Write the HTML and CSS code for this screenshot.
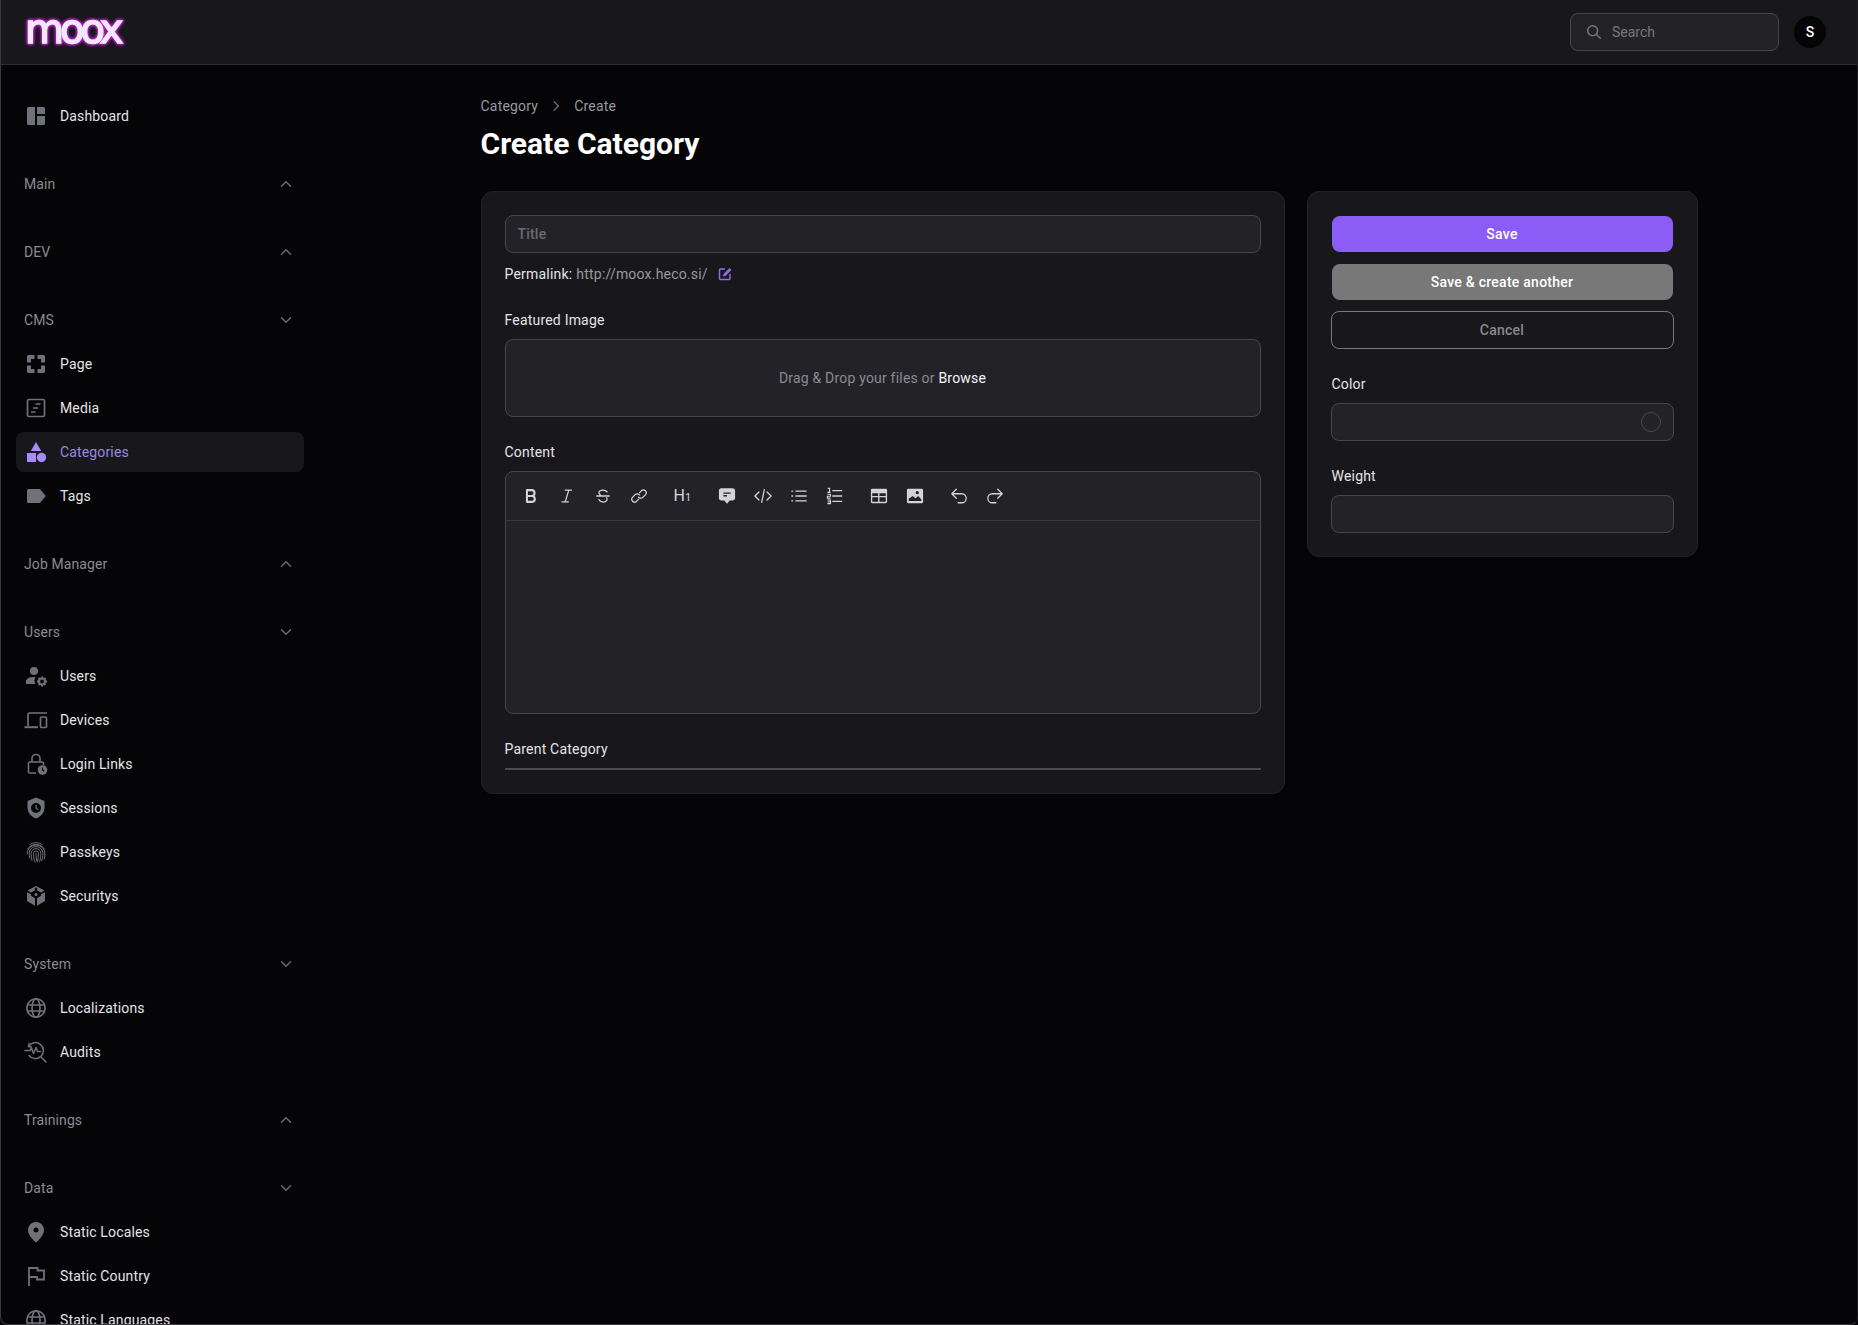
FILE: index.html
```html
<!DOCTYPE html>
<html lang="en">

<head>
  <meta charset="UTF-8">
  <meta name="viewport" content="width=device-width, initial-scale=1.0">
  <title>Create Category</title>
  <link rel="stylesheet" href="styles.css">
</head>

<body>
  <div class="app">
    <header class="topbar">
      <a class="logo">moox</a>
      <div class="topbar-right">
        <div class="search">
          <svg class="search-icon" viewBox="0 0 20 20" fill="none" stroke="currentColor" stroke-width="1.6" stroke-linecap="round"><circle cx="8.5" cy="8.5" r="5.5"/><path d="M12.7 12.7 17 17"/></svg>
          <span>Search</span>
        </div>
        <div class="avatar">S</div>
      </div>
    </header>

    <div class="layout">
      <nav class="sidebar">
        <a class="item">
          <svg class="ico" viewBox="0 0 24 24" fill="currentColor"><path d="M4.500 3H11v18H4.500A1.500 1.500 0 0 1 3 19.500v-15A1.500 1.500 0 0 1 4.500 3ZM13 3h6.500A1.500 1.500 0 0 1 21 4.500V10h-8ZM13 12h8v7.500a1.500 1.500 0 0 1-1.500 1.500H13Z"/></svg>
          <span>Dashboard</span>
        </a>

        <div class="group-head"><span>Main</span><svg class="chev" viewBox="0 0 20 20" fill="none" stroke="currentColor" stroke-width="1.6" stroke-linecap="round" stroke-linejoin="round"><path d="m5 12.500 5-5 5 5"/></svg></div>
        <div class="group-head"><span>DEV</span><svg class="chev" viewBox="0 0 20 20" fill="none" stroke="currentColor" stroke-width="1.6" stroke-linecap="round" stroke-linejoin="round"><path d="m5 12.500 5-5 5 5"/></svg></div>

        <div class="group">
          <div class="group-head"><span>CMS</span><svg class="chev" viewBox="0 0 20 20" fill="none" stroke="currentColor" stroke-width="1.6" stroke-linecap="round" stroke-linejoin="round"><path d="m5 7.500 5 5 5-5"/></svg></div>
          <a class="item">
            <svg class="ico" viewBox="0 0 24 24" fill="currentColor"><path d="M3 4.500A1.500 1.500 0 0 1 4.500 3h6v4H7v3.500H3ZM13.500 3h6A1.500 1.500 0 0 1 21 4.500v6h-4V7h-3.500ZM3 13.500h4V17h3.500v4h-6A1.500 1.500 0 0 1 3 19.500ZM17 13.500h4v6a1.500 1.500 0 0 1-1.500 1.500h-6v-4H17Z"/></svg>
            <span>Page</span>
          </a>
          <a class="item">
            <svg class="ico" viewBox="0 0 24 24" fill="none" stroke="currentColor" stroke-width="1.700"><rect x="3.500" y="3.500" width="17" height="17" rx="1.500"/><path d="M11.500 8h5M9 12h5M7 16h4.500"/></svg>
            <span>Media</span>
          </a>
          <a class="item active">
            <svg class="ico" viewBox="0 0 24 24" fill="currentColor"><path d="M12 2 17.200 11H6.800Z"/><rect x="3" y="13" width="9" height="9"/><circle cx="17.500" cy="17.500" r="4.700"/></svg>
            <span>Categories</span>
          </a>
          <a class="item">
            <svg class="ico" viewBox="0 0 24 24" fill="currentColor"><path d="M4.500 5H16l5.800 7-5.800 7H4.500A1.500 1.500 0 0 1 3 17.500v-11A1.500 1.500 0 0 1 4.500 5Z"/></svg>
            <span>Tags</span>
          </a>
        </div>

        <div class="group-head"><span>Job Manager</span><svg class="chev" viewBox="0 0 20 20" fill="none" stroke="currentColor" stroke-width="1.6" stroke-linecap="round" stroke-linejoin="round"><path d="m5 12.500 5-5 5 5"/></svg></div>

        <div class="group">
          <div class="group-head"><span>Users</span><svg class="chev" viewBox="0 0 20 20" fill="none" stroke="currentColor" stroke-width="1.6" stroke-linecap="round" stroke-linejoin="round"><path d="m5 7.500 5 5 5-5"/></svg></div>
          <a class="item">
            <svg class="ico" viewBox="0 0 24 24" fill="currentColor"><circle cx="10" cy="7" r="4"/><path d="M2 20v-2.500c0-2.500 3-4.500 8-4.500l1.500.1A6.500 6.500 0 0 0 11.500 20Z"/><circle cx="18" cy="17.500" r="3" fill="none" stroke="currentColor" stroke-width="2.200"/><path d="M18 12.500v2M18 20.500v2M13 17.500h2M21 17.500h2M14.500 14l1.400 1.400M20.100 19.600l1.400 1.400M14.500 21l1.400-1.400M20.100 15.400l1.400-1.400" stroke="currentColor" stroke-width="1.800"/></svg>
            <span>Users</span>
          </a>
          <a class="item">
            <svg class="ico" viewBox="0 0 24 24" fill="none" stroke="currentColor" stroke-width="1.700"><path d="M23 5H5.500A1.500 1.500 0 0 0 4 6.500V18"/><path d="M.500 19.200h13.500" stroke-width="2"/><rect x="16.500" y="9" width="6" height="10.500" rx="1"/></svg>
            <span>Devices</span>
          </a>
          <a class="item">
            <svg class="ico" viewBox="0 0 24 24" fill="none" stroke="currentColor" stroke-width="1.600"><path d="M12 21H5.500a1 1 0 0 1-1-1V11a1 1 0 0 1 1-1h13a1 1 0 0 1 1 1v2"/><path d="M8 10V6.500a4 4 0 0 1 8 0V10"/><circle cx="18.500" cy="18" r="4.800" fill="currentColor" stroke="none"/><path d="M18.500 15.500V18l1.800 1.200" stroke="#050507" stroke-width="1.200"/></svg>
            <span>Login Links</span>
          </a>
          <a class="item">
            <svg class="ico" viewBox="0 0 24 24" fill="currentColor"><path fill-rule="evenodd" d="M12 1.500 20.500 5v6.500c0 5-3.500 9.200-8.500 11-5-1.800-8.500-6-8.500-11V5ZM12 7a5 5 0 1 0 0 10 5 5 0 0 0 0-10Z"/><path d="M11.500 9h1.200v3l2 1.200-.6 1-2.600-1.600Z"/></svg>
            <span>Sessions</span>
          </a>
          <a class="item">
            <svg class="ico" viewBox="0 0 24 24" fill="none" stroke="currentColor" stroke-width="1" stroke-linecap="round"><path d="M6 4.500a11 11 0 0 1 12 0"/><path d="M3.500 9a10 10 0 0 1 17 0"/><path d="M3 14a9 9 0 0 1 18 0c0 2-.3 3.500-.8 5"/><path d="M5.700 18c-.4-1.500-.6-3-.6-4.500a6.900 6.900 0 0 1 13.800 0c0 2.500-.3 4.800-1.200 7"/><path d="M8 20.500c-.6-2-.9-4.500-.9-7a4.900 4.900 0 0 1 9.800 0c0 3-.4 5.500-1.200 8"/><path d="M11 22c-.9-2.500-1.500-5.500-1.500-8.500a2.500 2.500 0 0 1 5 0c0 3-.4 5.500-1 8"/><path d="M12 13.500c0 3 .5 6 1 8"/></svg>
            <span>Passkeys</span>
          </a>
          <a class="item">
            <svg class="ico" viewBox="0 0 24 24" fill="currentColor"><path d="M12 2 3.500 6.500 7 8.500l3.800-2V3.700h2.400v2.800L17 8.500l3.500-2ZM3 8.200V17l8 4.700v-7.500l-4-2.400v-1.300ZM21 8.200V17l-8 4.700v-7.500l4-2.400v-1.300Z"/><circle cx="12" cy="10.500" r="1.500"/></svg>
            <span>Securitys</span>
          </a>
        </div>

        <div class="group">
          <div class="group-head"><span>System</span><svg class="chev" viewBox="0 0 20 20" fill="none" stroke="currentColor" stroke-width="1.6" stroke-linecap="round" stroke-linejoin="round"><path d="m5 7.500 5 5 5-5"/></svg></div>
          <a class="item">
            <svg class="ico" viewBox="0 0 24 24" fill="none" stroke="currentColor" stroke-width="1.700"><circle cx="12" cy="12" r="9.200"/><ellipse cx="12" cy="12" rx="4" ry="9.200"/><path d="M3.200 9h17.600M3.200 15h17.600"/></svg>
            <span>Localizations</span>
          </a>
          <a class="item">
            <svg class="ico" viewBox="0 0 24 24" fill="none" stroke="currentColor" stroke-width="1.500" stroke-linecap="round" stroke-linejoin="round"><path d="M4.500 6.500A8 8 0 1 1 5 15.500"/><path d="M1 10.500h5l1.500-2.500 2 5.500 2.500-6 1.500 4h3"/><path d="m4.500 6.500.5-3M4.500 6.500l3 .5M17 17l5 5" /></svg>
            <span>Audits</span>
          </a>
        </div>

        <div class="group-head"><span>Trainings</span><svg class="chev" viewBox="0 0 20 20" fill="none" stroke="currentColor" stroke-width="1.6" stroke-linecap="round" stroke-linejoin="round"><path d="m5 12.500 5-5 5 5"/></svg></div>

        <div class="group">
          <div class="group-head"><span>Data</span><svg class="chev" viewBox="0 0 20 20" fill="none" stroke="currentColor" stroke-width="1.6" stroke-linecap="round" stroke-linejoin="round"><path d="m5 7.500 5 5 5-5"/></svg></div>
          <a class="item">
            <svg class="ico" viewBox="0 0 24 24" fill="currentColor"><path fill-rule="evenodd" d="M12 2a8 8 0 0 1 8 8c0 4.500-4 9-8 12.500C8 19 4 14.500 4 10a8 8 0 0 1 8-8Zm0 5.500a2.500 2.500 0 1 0 0 5 2.500 2.500 0 0 0 0-5Z"/></svg>
            <span>Static Locales</span>
          </a>
          <a class="item">
            <svg class="ico" viewBox="0 0 24 24" fill="none" stroke="currentColor" stroke-width="1.800"><path d="M5 22V4h8.500v2.500H20v9h-7v-2.500H5"/></svg>
            <span>Static Country</span>
          </a>
          <a class="item">
            <svg class="ico" viewBox="0 0 24 24" fill="none" stroke="currentColor" stroke-width="1.700"><circle cx="12" cy="12" r="9.200"/><ellipse cx="12" cy="12" rx="4" ry="9.200"/><path d="M3.200 9h17.600M3.200 15h17.600"/></svg>
            <span>Static Languages</span>
          </a>
        </div>
      </nav>

      <main class="main">
        <div class="container">
          <div class="breadcrumb">
            <span>Category</span>
            <svg class="crumb-sep" viewBox="0 0 20 20" fill="none" stroke="currentColor" stroke-width="1.500" stroke-linecap="round" stroke-linejoin="round"><path d="m7.500 4.500 5.500 5.500-5.500 5.500"/></svg>
            <span>Create</span>
          </div>
          <h1 class="title">Create Category</h1>

          <div class="form-grid">
            <section class="card main-card">
              <div class="input title-input">Title</div>
              <div class="permalink">
                <span class="permalink-label">Permalink:</span>
                <span class="permalink-url">http://moox.heco.si/</span>
                <svg class="edit-icon" viewBox="0 0 16 16" fill="none" stroke="currentColor" stroke-width="1.500"><path d="M8 3H3.500a1 1 0 0 0-1 1v8.500a1 1 0 0 0 1 1H12a1 1 0 0 0 1-1V8"/><path d="M6 10.500 6.500 8l6-6 2 2-6 6Z" fill="currentColor" stroke="none"/></svg>
              </div>

              <label class="label label-image">Featured Image</label>
              <div class="dropzone">Drag &amp; Drop your files or&nbsp;<span class="browse">Browse</span></div>

              <label class="label label-content">Content</label>
              <div class="editor">
                <div class="toolbar">
                  <div class="tool-group">
                    <span class="tool"><svg viewBox="0 0 20 20" fill="none" stroke="currentColor" stroke-width="2.300" stroke-linejoin="round"><path d="M5.500 3.500h5.200a3.200 3.200 0 0 1 0 6.500H5.500ZM5.500 10h6a3.300 3.300 0 0 1 0 6.500h-6Z"/></svg></span>
                    <span class="tool"><svg viewBox="0 0 20 20" fill="none" stroke="currentColor" stroke-width="1.400" stroke-linecap="round"><path d="M8 3.500h7M4.500 16.500h7M12 3.500 8 16.500"/></svg></span>
                    <span class="tool"><svg viewBox="0 0 20 20" fill="none" stroke="currentColor" stroke-width="1.400" stroke-linecap="round"><path d="M3 10h14M14.500 5.500C13.500 4 12 3.500 10 3.500c-2.500 0-4.500 1.200-4.500 3 0 1 .5 2 2 2.700M5.500 14c.8 1.700 2.500 2.700 4.500 2.700 2.700 0 4.500-1.200 4.500-3 0-.6-.1-1.100-.4-1.700"/></svg></span>
                    <span class="tool"><svg viewBox="0 0 20 20" fill="none" stroke="currentColor" stroke-width="1.400" stroke-linecap="round"><path d="M10.500 6.500 12.800 4a3.200 3.200 0 0 1 4.500 4.500l-3 3a3.200 3.200 0 0 1-4.800-.3"/><path d="M9.500 13.500 7.200 16a3.200 3.200 0 0 1-4.500-4.500l3-3a3.200 3.200 0 0 1 4.800.3"/></svg></span>
                  </div>
                  <div class="tool-group">
                    <span class="tool tool-h">H<small>1</small></span>
                  </div>
                  <div class="tool-group">
                    <span class="tool"><svg viewBox="0 0 20 20" fill="currentColor"><path fill-rule="evenodd" d="M4 1.500h12A3 3 0 0 1 19 4.500v7.500a3 3 0 0 1-3 3h-3l-3 3.500L7 15H4a3 3 0 0 1-3-3V4.500a3 3 0 0 1 3-3ZM6 6v1.500h8V6ZM6 9v1.500h4V9Z"/></svg></span>
                    <span class="tool"><svg viewBox="0 0 20 20" fill="none" stroke="currentColor" stroke-width="1.400" stroke-linecap="round" stroke-linejoin="round"><path d="M5.500 5.500 1 10l4.500 4.500M14.500 5.500 19 10l-4.500 4.500M11.500 3 8.500 17"/></svg></span>
                    <span class="tool"><svg viewBox="0 0 20 20" fill="none" stroke="currentColor" stroke-width="1.400" stroke-linecap="round"><path d="M6.500 4.500H18M6.500 10H18M6.500 15.500H18M2 4.500h1M2 10h1M2 15.500h1"/></svg></span>
                    <span class="tool"><svg viewBox="0 0 20 20" fill="none" stroke="currentColor" stroke-width="1.400"><path d="M7 4h11M7 10h11M7 16h11"/><path d="M2 1.500h2v4.500M1.500 6h3.500" stroke-width="1.200"/><path d="M1.500 8h3.500v2.200H1.500v2.200H5" stroke-width="1.200"/><path d="M1.500 14.500H5v2H2M5 16.500v2H1.500" stroke-width="1.200"/></svg></span>
                  </div>
                  <div class="tool-group">
                    <span class="tool"><svg viewBox="0 0 20 20" fill="currentColor"><path fill-rule="evenodd" d="M2.500 2h15A1.500 1.500 0 0 1 19 3.500v13a1.500 1.500 0 0 1-1.500 1.500h-15A1.500 1.500 0 0 1 1 16.500v-13A1.500 1.500 0 0 1 2.500 2ZM2.500 7v3h6.500V7Zm8 0v3h7V7Zm-8 4.500V16.500h6.500v-5Zm8 0v5h7v-5Z"/></svg></span>
                    <span class="tool"><svg viewBox="0 0 20 20" fill="currentColor"><path fill-rule="evenodd" d="M2.500 2h15A1.500 1.500 0 0 1 19 3.500v13a1.500 1.500 0 0 1-1.500 1.500h-15A1.500 1.500 0 0 1 1 16.500v-13A1.500 1.500 0 0 1 2.500 2ZM3 15.500h14v-2l-3.500-3.500-3 2.500-3-2.500L3 13ZM12.500 4.500a1.800 1.800 0 1 0 0 3.600 1.800 1.800 0 0 0 0-3.600Z"/></svg></span>
                  </div>
                  <div class="tool-group">
                    <span class="tool"><svg viewBox="0 0 20 20" fill="none" stroke="currentColor" stroke-width="1.400" stroke-linecap="round" stroke-linejoin="round"><path d="M7 2.500 2 7.500l5 5M2 7.500h11a5 5 0 0 1 0 10H9"/></svg></span>
                    <span class="tool"><svg viewBox="0 0 20 20" fill="none" stroke="currentColor" stroke-width="1.400" stroke-linecap="round" stroke-linejoin="round"><path d="m13 2.500 5 5-5 5M18 7.500H7a5 5 0 0 0 0 10h4"/></svg></span>
                  </div>
                </div>
                <div class="editor-body"></div>
              </div>

              <label class="label label-parent">Parent Category</label>
              <div class="parent-line"></div>
            </section>

            <aside class="card side-card">
              <button class="btn btn-save">Save</button>
              <button class="btn btn-another">Save &amp; create another</button>
              <button class="btn btn-cancel">Cancel</button>

              <label class="label label-color">Color</label>
              <div class="input color-input"><span class="swatch"></span></div>

              <label class="label label-weight">Weight</label>
              <div class="input"></div>
            </aside>
          </div>
        </div>
      </main>
    </div>
  </div>
</body>

</html>
```

FILE: styles.css
```css
* {
  box-sizing: border-box;
}

html,
body {
  margin: 0;
  height: 100%;
}

body {
  background: #050507;
  color: #e4e4e7;
  font-family: Roboto, "Liberation Sans", sans-serif;
  font-size: 14px;
  line-height: 20px;
  letter-spacing: .2px;
  overflow: hidden;
}

.app {
  height: 100vh;
  display: flex;
  flex-direction: column;
  border-left: 1px solid #3a3a40;
  border-right: 1px solid #1c1c20;
  border-bottom: 1px solid #3a3a40;
  border-radius: 0 0 8px 8px;
  overflow: hidden;
}

/* top bar */
.topbar {
  height: 65px;
  flex: none;
  display: flex;
  align-items: center;
  justify-content: space-between;
  padding: 0 31px 0 24px;
  background: #18181c;
  border-bottom: 1px solid #2c2c31;
}

.logo {
  font-family: "DejaVu Sans", sans-serif;
  font-weight: 400;
  font-size: 40px;
  line-height: 40px;
  letter-spacing: -4px;
  color: #f3e8fb;
  -webkit-text-stroke: 1.6px #f3e8fb;
  margin-top: -6px;
  filter: drop-shadow(0 0 1px #c026d3) drop-shadow(0 0 1px #a21caf) drop-shadow(0 0 1px #a21caf);
}

.topbar-right {
  display: flex;
  align-items: center;
  gap: 15px;
}

.search {
  width: 209px;
  height: 38px;
  display: flex;
  align-items: center;
  gap: 9px;
  padding: 0 14px;
  color: #77777e;
  background: #232327;
  border: 1px solid #46464c;
  border-radius: 8px;
  letter-spacing: 0;
}

.search-icon {
  width: 18px;
  height: 18px;
  flex: none;
}

.avatar {
  width: 32px;
  height: 32px;
  display: flex;
  align-items: center;
  justify-content: center;
  border-radius: 50%;
  background: #050507;
  color: #fff;
  font-weight: 500;
}

/* sidebar */
.layout {
  flex: 1;
  display: flex;
  min-height: 0;
}

.sidebar {
  width: 319px;
  flex: none;
  display: flex;
  flex-direction: column;
  gap: 28px;
  padding: 31px 16px 0 15px;
  overflow: hidden;
}

.group {
  display: flex;
  flex-direction: column;
  gap: 4px;
}

.item {
  height: 40px;
  flex: none;
  display: flex;
  align-items: center;
  gap: 12px;
  padding: 0 8px;
  border-radius: 8px;
  color: #e4e4e7;
  letter-spacing: .15px;
}

.item.active {
  background: #18181c;
  color: #9d85e6;
}

.ico {
  width: 24px;
  height: 24px;
  flex: none;
  color: #71717a;
}

.active .ico {
  color: #a78bfa;
}

.group-head {
  height: 40px;
  flex: none;
  display: flex;
  align-items: center;
  justify-content: space-between;
  padding: 0 8px;
  color: #8a8a92;
  letter-spacing: .1px;
}

.chev {
  width: 18px;
  height: 18px;
  margin-right: 1px;
  color: #6a6a72;
}

/* main */
.main {
  flex: 1;
  min-width: 0;
}

.container {
  max-width: 1280px;
  margin: 0 auto;
  padding: 31px 31px 0 32px;
}

.breadcrumb {
  display: flex;
  align-items: center;
  gap: 10px;
  height: 20px;
  color: #98989f;
}

.crumb-sep {
  width: 16px;
  height: 16px;
  color: #77777e;
}

.title {
  margin: 10px 0 0;
  font-size: 30px;
  line-height: 36px;
  font-weight: 700;
  letter-spacing: 0;
  color: #fff;
}

.form-grid {
  display: grid;
  grid-template-columns: repeat(3, 1fr);
  gap: 22px;
  align-items: start;
  margin-top: 29px;
}

.card {
  background: #18181c;
  border: 1px solid #222226;
  border-radius: 12px;
  padding: 23px;
  display: flex;
  flex-direction: column;
  box-shadow: 0 1px 2px rgba(0, 0, 0, .4);
}

.main-card {
  grid-column: span 2;
}

.input {
  height: 38px;
  flex: none;
  display: flex;
  align-items: center;
  padding: 0 12px;
  background: #232327;
  border: 1px solid #46464c;
  border-radius: 8px;
}

.title-input {
  color: #6b6b72;
  font-weight: 500;
}

.permalink {
  display: flex;
  align-items: center;
  height: 20px;
  margin-top: 11px;
  gap: 4px;
}

.permalink-url {
  color: #98989f;
}

.edit-icon {
  width: 16px;
  height: 16px;
  margin-left: 5px;
  color: #8b6fe0;
}

.label {
  display: block;
  height: 20px;
  color: #e4e4e7;
}

.label-image {
  margin-top: 26px;
}

.dropzone {
  height: 78px;
  margin-top: 9px;
  display: flex;
  align-items: center;
  justify-content: center;
  color: #8a8a92;
  background: #232327;
  border: 1px solid #46464c;
  border-radius: 8px;
}

.browse {
  color: #f4f4f5;
}

.label-content {
  margin-top: 25px;
}

.editor {
  height: 243px;
  margin-top: 9px;
  display: flex;
  flex-direction: column;
  background: #232327;
  border: 1px solid #46464c;
  border-radius: 8px;
}

.toolbar {
  height: 49px;
  flex: none;
  display: flex;
  align-items: center;
  gap: 8px;
  padding: 0 7px;
  border-bottom: 1px solid #37373c;
}

.tool-group {
  display: flex;
}

.tool {
  width: 36px;
  height: 36px;
  display: flex;
  align-items: center;
  justify-content: center;
  color: #d4d4d8;
}

.tool svg {
  width: 18px;
  height: 18px;
}

.tool-h {
  font-size: 16px;
}

.tool-h small {
  font-size: 11px;
  margin-top: 4px;
}

.editor-body {
  flex: 1;
}

.label-parent {
  margin-top: 25px;
}

.parent-line {
  height: 2px;
  margin-top: 9px;
  background: #4a4a50;
}

/* side card */
.btn {
  height: 36px;
  flex: none;
  border: none;
  border-radius: 8px;
  font: inherit;
  font-weight: 500;
  letter-spacing: .25px;
  color: #fff;
}

.side-card .btn,
.side-card .label {
  margin-left: 1px;
  margin-right: 1px;
}

.btn-save {
  margin-top: 1px;
  background: #8b5cf6;
}

.btn-another {
  margin-top: 12px;
  background: #787878;
}

.btn-cancel {
  height: 38px;
  margin: 11px 0 0 !important;
  background: transparent;
  border: 1px solid #7a7a7a;
  color: #8a8a8a;
}

.label-color {
  margin-top: 25px;
}

.label-weight {
  margin-top: 25px;
}

.label-color + .input,
.label-weight + .input {
  margin-top: 9px;
}

.color-input {
  justify-content: flex-end;
}

.swatch {
  width: 20px;
  height: 20px;
  border-radius: 50%;
  border: 1px solid #46464c;
}
```
